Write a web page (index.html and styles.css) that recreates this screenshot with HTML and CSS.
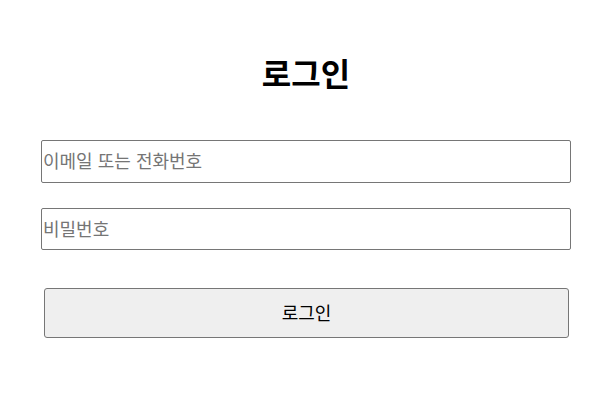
FILE: index.html
```html
<!DOCTYPE html>
<html lang="ko">
<head>
<meta charset="utf-8">
<link rel="stylesheet" href="styles.css">
</head>
<body>
<main class="login">
  <h1 class="login-title">로그인</h1>
  <form class="login-form">
    <input class="field" type="text" placeholder="이메일 또는 전화번호">
    <input class="field" type="password" placeholder="비밀번호">
    <button class="submit" type="button">로그인</button>
  </form>
</main>
</body>
</html>
```

FILE: styles.css
```css
html, body {
  margin: 0;
  padding: 0;
  background: #fff;
}
body {
  font-family: "Noto Sans CJK KR", "Noto Sans", sans-serif;
}
.login {
  margin: 0 42px 0 41px;
  padding-top: 50px;
}
.login-title {
  margin: 0 0 46px;
  text-align: center;
  font-size: 32px;
  line-height: 44px;
  font-weight: 700;
  color: #000;
}
.login-form {
  display: flex;
  flex-direction: column;
}
.field {
  box-sizing: border-box;
  height: 43px;
  margin: 0 0 25px;
  padding: 0 2px 3px 1px;
  border: 1px solid #767676;
  border-radius: 2px;
  font-family: inherit;
  font-size: 18px;
  color: #000;
  background: #fff;
  outline: none;
}
.field::placeholder {
  color: #757575;
}
.field + .field {
  height: 42px;
  margin-bottom: 38px;
}
.submit {
  box-sizing: border-box;
  height: 50px;
  margin: 0 2px 0 3px;
  padding: 0 0 2px;
  border: 1px solid #767676;
  border-radius: 3px;
  background: #efefef;
  font-family: inherit;
  font-size: 18px;
  color: #000;
}
```
